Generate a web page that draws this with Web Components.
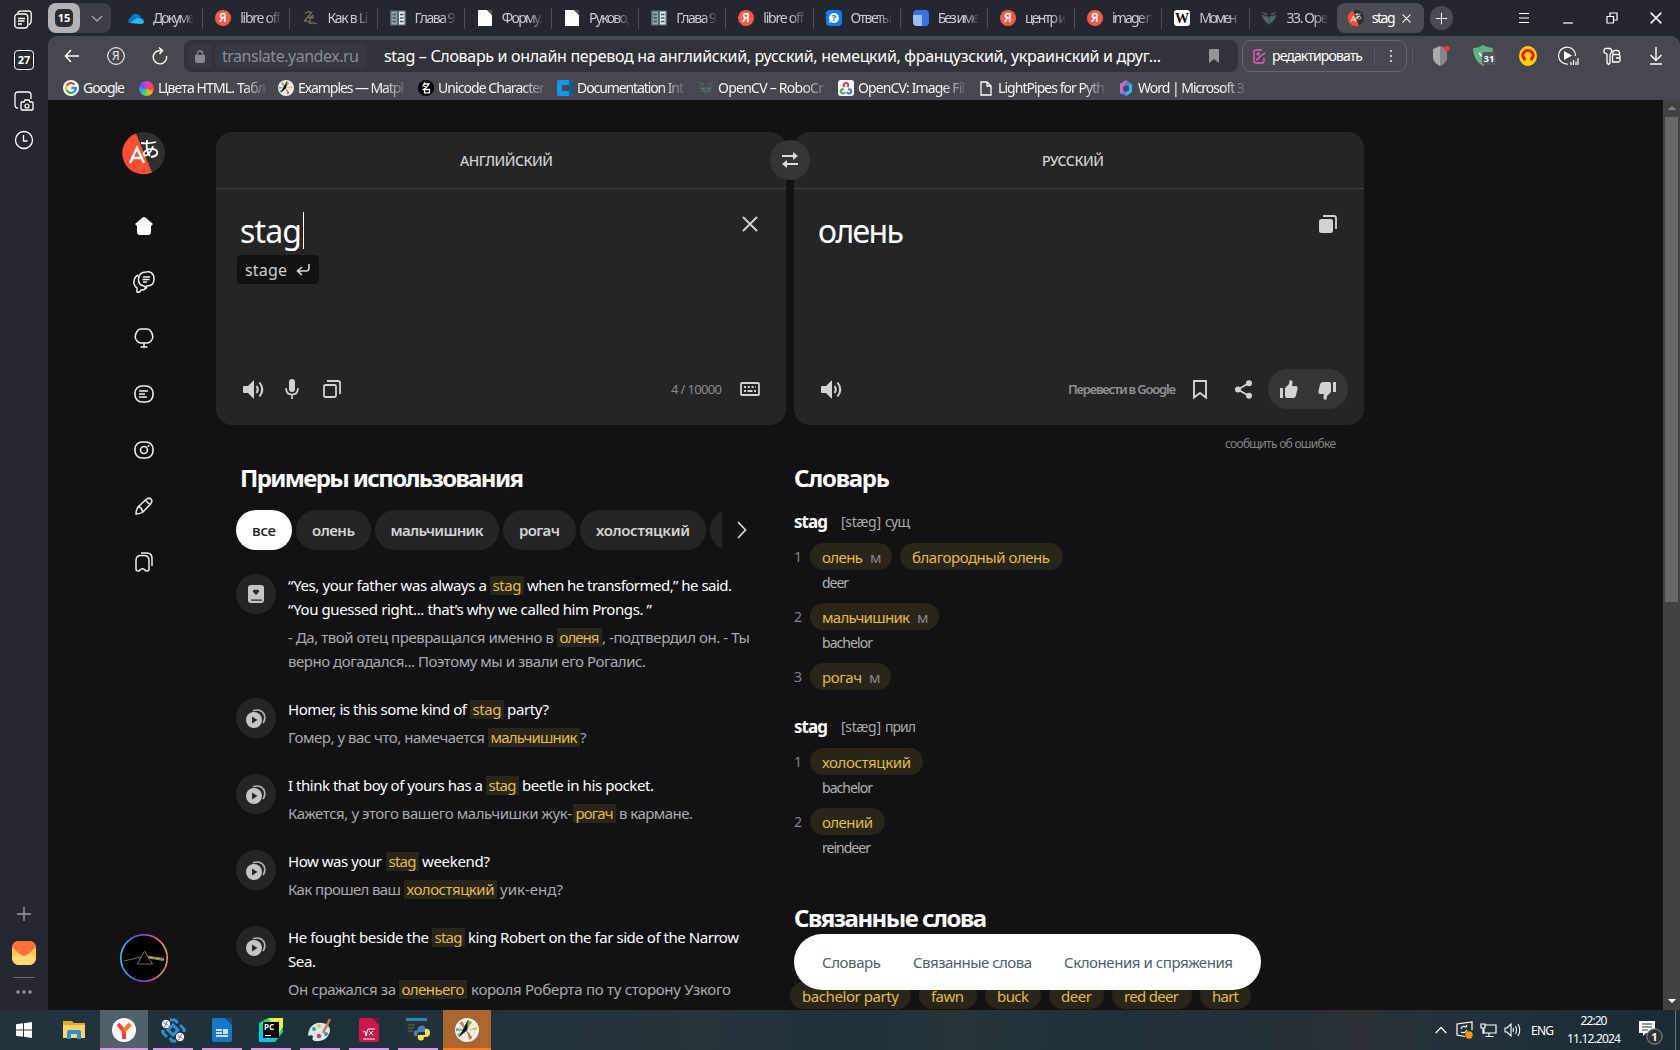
<!DOCTYPE html>
<html lang="ru">
<head>
<meta charset="utf-8">
<title>stag – Словарь и онлайн перевод</title>
<style>
html,body{margin:0;height:100%;overflow:hidden;background:#121214}
body{font-family:"Noto Sans","Noto Sans CJK JP",sans-serif;color:#fff}
</style>
</head>
<body>
<desktop-shell></desktop-shell>
<script>
const ya = '<circle cx="8" cy="8" r="8" fill="#f95a4a"/><text x="7.8" y="12.4" font-size="12" font-weight="600" fill="#fff" text-anchor="middle">Я</text>';
const book = '<path fill="#526873" d="M0 0h16v15H0z"/><path fill="#8fa0a8" d="M1.500 1h5.500v13H1.500z"/><path fill="#e4e9eb" d="M9 1h5.500v13H9z"/><path stroke="#40555f" stroke-width="1.300" d="M2.500 4h3.500M2.500 7.500h3.500M2.500 11h3.500M10 4h3.500M10 7.500h3.500M10 11h3.500"/>';
const doc = '<path fill="#fff" d="M1 0h9l5 5v11H1z"/><path fill="#555" d="M10 0h5v5z"/>';
const opencv = '<path fill="#64614c" d="M1 2l6 2-2 1-4-2zM15 2L9 4l2 1 4-2z"/><path fill="#3c5a68" d="M0 5l7 1 1 2 1-2 7-1-3 5-5 5-5-5z"/><path stroke="#807044" fill="none" d="M2 8l5 1M14 8l-5 1M4 11h3M12 11H9"/>';
const logo = '<circle cx="21" cy="21" r="21" fill="#302f30"/><path fill="#ff4e31" d="M13 1.600L29 40.400A21 21 0 1 1 13 1.600Z"/><path d="M7 31l7-15 7 15M9.500 26h9" fill="none" stroke="#fff" stroke-width="2.500"/><path d="M18 11c6 1 11 0 15-1M24 8c-1 8 0 13 3 16M30 14c-2 7-7 11-9 9s3-7 9-6 6 7-2 8" fill="none" stroke="#fff" stroke-width="1.800"/>';
const spk = '<path fill="currentColor" d="M0 7q0-1 1-1h4l5-5q1-1 1 0v17q0 1-1 0l-5-5H1q-1 0-1-1z"/><path fill="none" stroke="currentColor" stroke-width="2" d="M13.500 6q2.500 3.500 0 7M16.500 2.500q5.500 7 0 14"/>';
const thumb = '<path fill="currentColor" d="M0 8h3v10H0zM5 8l4-4 .5-3.500C11.500-.5 13 1 12.500 3L12 6h4.500Q18 6.500 17.500 9L16 15.500Q15.500 18 13 18H7q-2 0-2-2z"/>';
const mpl = (b) => `<circle cx="12" cy="12" r="12" fill="${b}"/><g fill="none" stroke="#d9d9d9"><circle cx="12" cy="12" r="4"/><circle cx="12" cy="12" r="8"/></g><path fill="#ef7b26" d="M12 12L5 5l2-2zM12 12l5 8-3 2z"/><path fill="#86b340" d="M12 12L13 2l4 2zM12 12L4 19l-2-3z"/><path fill="#59b0b5" d="M12 12L1 13v-3z"/><path fill="#efc22d" d="M12 12l10-3v3z"/><path stroke="#555" stroke-width=".7" d="M5 5l12 15M13 2l-1 10L4 19"/>`;
const ICONS = {
  tabs:['0 0 18 19','<g fill="none" stroke="#fff" stroke-width="1.300"><rect x=".8" y="4" width="13" height="14" rx="3"/><path d="M4 3.500Q4 1.300 6 1.200L14.500.8Q17 .8 17.200 3.500V11Q17 14 14.500 15M4 8.500h7M4 11h6.500M4 14h4"/></g>'],
  shot:['0 0 20 20','<path fill="none" stroke="#fff" stroke-width="1.300" d="M4 17Q1 17 1 14V4q0-3 3-3h10q3 0 3 3v4M8 11h2l1-2h4l1 2h2q1 0 1 1v6q0 1-1 1H8q-1 0-1-1v-6q0-1 1-1z"/><circle cx="13" cy="15" r="2" fill="none" stroke="#fff" stroke-width="1.200"/>'],
  clock:['0 0 20 20','<circle cx="10" cy="10" r="8.500" fill="none" stroke="#fff" stroke-width="1.300"/><path d="M9.500 5v6h4" fill="none" stroke="#fff" stroke-width="1.300"/>'],
  plus:['0 0 16 16','<path stroke="currentColor" stroke-width="1.300" d="M8 1v14M1 8h14"/>'],
  mail:['0 0 24 24','<rect width="24" height="24" rx="7" fill="#ffc64d"/><path fill="#ffda76" d="M0 16L9 11l3 2 3-2 9 6q-1 7-7 7H7q-6 0-7-7z"/><path fill="#ff703c" d="M0 6Q1 0 7 0h10q6 0 7 6l-9 8q-3 2-6 0z"/>'],
  dots:['0 0 16 4','<g fill="#9699a0"><circle cx="2" cy="2" r="1.700"/><circle cx="8" cy="2" r="1.700"/><circle cx="14" cy="2" r="1.700"/></g>'],
  chevd:['0 0 12 7','<path fill="none" stroke="#a4a5aa" stroke-width="1.400" d="M1 1l5 5 5-5"/>'],
  cloud:['0 0 16 16','<path fill="#087bd1" d="M1 13Q-1 9 3 7.500 5 3 9 4q3 .5 4 4 4 1 2.500 5z"/><path fill="#36b7f4" d="M2 13l7-5q5 0 7 4-.5 2-3 2z"/>'],
  ya:['0 0 16 16',ya], book:['0 0 16 15',book], doc:['0 0 16 16',doc], opencv:['0 0 16 16',opencv],
  zl:['0 0 16 16','<path d="M3 3.500q4-3 6.500-1L2 11.500q3-1.500 5 1M11 5Q7 9 8 13.500q3-1.500 7 .5M6 7.500h6" fill="none" stroke="#77705d" stroke-width="1.300"/>'],
  quest:['0 0 16 16','<rect width="16" height="16" rx="4" fill="#087eff"/><path fill="#fff" d="M8 3a5 5 0 1 1-3 9l-2 1 .5-3A5 5 0 0 1 8 3z"/><text x="8" y="11.300" font-size="9" font-weight="800" fill="#087eff" text-anchor="middle">?</text>'],
  cube:['0 0 16 16','<path fill="#3a72e6" d="M4 0h8q4 0 4 4v8q0 4-4 4H9V5H0q0-5 4-5z"/><path fill="#99bdff" d="M0 5h9v11H4q-4 0-4-4z"/>'],
  wiki:['0 0 16 16','<rect width="16" height="16" rx="3" fill="#fff"/><text x="8" y="12.500" font-family="Liberation Serif" font-size="14" font-weight="700" fill="#111" text-anchor="middle">W</text>'],
  logo:['0 0 42 42',logo],
  x:['0 0 16 16','<path stroke="currentColor" stroke-width="1.900" stroke-linecap="round" d="M1.500 1.500l13 13M14.500 1.500l-13 13"/>'],
  menu:['0 0 12 12','<path stroke="#fff" d="M1 1.500h10M1 6h10M1 10.500h10"/>'],
  min:['0 0 12 12','<path stroke="#fff" stroke-width="1.200" d="M1 11h10"/>'],
  restore:['0 0 12 12','<path fill="none" stroke="#fff" stroke-width="1.200" d="M1 4.500h6.500V11H1zM4 4V1h7v7H8"/>'],
  back:['0 0 16 14','<path fill="none" stroke="#fff" stroke-width="1.400" d="M15 7H1.500M7 1L1.500 7 7 13"/>'],
  yaring:['0 0 18 18','<circle cx="9" cy="9" r="8.300" fill="none" stroke="#e8e8ea" stroke-width="1.200"/><text x="8.800" y="13.200" font-size="12" fill="#e8e8ea" text-anchor="middle">Я</text>'],
  reload:['0 0 16 18','<path fill="none" stroke="#fff" stroke-width="1.400" d="M14.500 9A6.700 6.700 0 1 1 8 3.500h2M7 .5l3.500 3-3 3.500"/>'],
  lock:['0 0 10 13','<path fill="#868990" d="M0 5h10v6q0 2-2 2H2q-2 0-2-2z"/><path fill="none" stroke="#868990" stroke-width="1.400" d="M2.500 6V3.500Q2.500 1 5 1t2.500 2.500V6"/>'],
  flag:['0 0 10 14','<path fill="#95969b" d="M1 0h8q1 0 1 1v13l-5-4-5 4V1q0-1 1-1z"/>'],
  edit:['0 0 13 15','<path fill="none" stroke="#eb5fbd" stroke-width="1.400" d="M9 1H3Q1 1 1 3v9q0 2 2 2h6q2 0 2-2V9M5.500 10.500l.5-2L12 4M3.500 5h3.500M5.200 3.200v3.600M3 10.500h2M4 9.500v2"/>'],
  vdots:['0 0 4 14','<g fill="#c4c4c8"><circle cx="2" cy="2" r="1.200"/><circle cx="2" cy="7" r="1.200"/><circle cx="2" cy="12" r="1.200"/></g>'],
  shield:['0 0 18 22','<path fill="#acacad" d="M1 4l7-3 7 3v8q0 6-7 9-7-3-7-9z"/><path fill="#868688" d="M8 1l7 3v8q0 6-7 9z"/><circle cx="15" cy="3.500" r="2.800" fill="#ee3340"/>'],
  ext:['0 0 24 22','<path fill="#5eb581" d="M0 3Q6 3 10 0q5 3 10 3 0 13-10 18Q0 15 0 3z"/><path stroke="#fff" stroke-width="1.600" fill="none" d="M6 8l3 3 3-3"/><rect x="9" y="7" width="14" height="13" rx="3" fill="#55565a"/><text x="16" y="17.300" font-size="9.500" font-weight="700" fill="#fff" text-anchor="middle">31</text>'],
  head:['0 0 18 20','<ellipse cx="9" cy="10" rx="9" ry="10" fill="#ffd400"/><path fill="none" stroke="#f21926" stroke-width="3" d="M5.500 14.500v-2Q3 11 4 8q1-3.500 5-3.500T14 8q1 3-1.500 4.500v2"/>'],
  play:['0 0 20 20','<path fill="none" stroke="#fff" stroke-width="1.200" d="M10 18A8.500 8.500 0 1 1 17.500 10M13 19v-3M15.500 19v-5M18 19v-3.500M20 19v-7"/><path fill="#fff" d="M6 5l8 4.500L6 14z"/>'],
  keys:['0 0 18 19','<path fill="none" stroke="#fff" stroke-width="1.300" stroke-linejoin="round" d="M2 1.500h5.500L9 3.500 7.500 7 7 8v8l-1.500 1.500L4 16V7L1 5.500V3zM10 7.500V5.500q0-2 2-2h2.500q1.500 0 2 2V8M9.500 15V9q0-1.500 1.500-1.500h4.500Q17 7.500 17 9v4.500q0 1.500-1.500 1.500zM13 11h4"/>'],
  down:['0 0 14 18','<path fill="none" stroke="#fff" stroke-width="1.400" d="M7 0v13M1.500 8L7 13.500 12.500 8M1 17h12"/>'],
  google:['0 0 16 16','<circle cx="8" cy="8" r="8" fill="#fff"/><g fill="none" stroke-width="2.300"><path stroke="#ea4335" d="M3.700 5.700A5 5 0 0 1 11.500 4.500"/><path stroke="#fbbc05" d="M3.700 5.700a5 5 0 0 0 0 4.600"/><path stroke="#34a853" d="M3.700 10.300A5 5 0 0 0 11.300 11.700"/><path stroke="#4285f4" d="M11.300 11.700A5 5 0 0 0 13 8H8.200"/></g>'],
  uni:['0 0 16 16','<circle cx="8" cy="8" r="8" fill="#000"/><path d="M7 2.500L4.500 6.500M6.300 4h4.700q-2 4-6.500 6M6 6l2.500 1.500M6.500 9.500h5v3.300h-5z" fill="none" stroke="#fff" stroke-width="1.300"/>'],
  docu:['0 0 16 16','<rect width="16" height="16" rx="2" fill="#1496ec"/><path fill="#474750" d="M5 5h7v6H5z"/><path fill="#075e9c" d="M12 0h2q2 0 2 2v12q0 2-2 2h-2z"/>'],
  cv:['0 0 16 16','<rect width="16" height="16" rx="3" fill="#fff"/><g fill="none" stroke-width="2"><path stroke="#e33" d="M6.500 7a2.300 2.300 0 1 1 3 0"/><path stroke="#37af50" d="M6 9.500A2.200 2.200 0 1 0 7 12"/><path stroke="#3478d4" d="M10 9.500A2.200 2.200 0 1 1 9 12"/></g>'],
  page:['0 0 12 15','<path fill="none" stroke="#fff" stroke-width="1.300" d="M1 1h6l4 4v9H1zM7 1v4h4"/>'],
  office:['0 0 16 16','<path fill="#6378dc" d="M8 0l6 4v8l-6 4-6-3V4z"/><path fill="#b96ed5" d="M2 4l6-4v5L5 8v6l-3-1z"/><path fill="#2db7f1" d="M14 4v8l-6 4v-4l3-2V6z"/><path fill="#474750" d="M8 5l3 2v3l-3 2-3-2V7z"/>'],
  mpl:['0 0 24 24',mpl('#f3f3f3')],
  home:['0 0 18 18','<path fill="#fff" d="M9 0q1 0 2 1l7 6-2 2v6q0 3-3 3H5q-3 0-3-3V9L0 7l7-6q1-1 2-1z"/>'],
  chat:['0 0 22 22','<path fill="none" stroke="#eee" stroke-width="1.500" d="M13 1C17 0 21 2 21 8q0 7-7 7l-2 1-1-1Q5 14 5.500 8 6 1 13 1zM5 4Q0 7 1 13q1 3 3 4v4q3 1 4-2 4 0 6-3M10 6h7M9.500 8.500h7M10 11h4"/>'],
  tree:['0 0 20 20','<path fill="none" stroke="#eee" stroke-width="1.500" d="M6.500 1h7q2 0 3.500 2.500 3.500 5.500 0 9.500-1.500 2-4 2H7q-2.500 0-4-2-3.500-4 0-9.500Q4.500 1 6.500 1zM10 15v4M6.500 19h7"/>'],
  note:['0 0 20 18','<rect x="1" y="1" width="18" height="16" rx="7" fill="none" stroke="#eee" stroke-width="1.600"/><path stroke="#eee" stroke-width="1.300" d="M5 6h9M5 9h6M5 12h8"/>'],
  cam:['0 0 20 18','<rect x="1" y="1" width="18" height="16" rx="7" fill="none" stroke="#eee" stroke-width="1.600"/><circle cx="10" cy="9" r="3.500" fill="none" stroke="#eee" stroke-width="1.600"/><circle cx="14.500" cy="5" r="1" fill="#eee"/>'],
  pencil:['0 0 18 18','<path fill="none" stroke="#eee" stroke-width="1.500" d="M1 17q0-4 2-7L11 2.500q3-2.500 5-.5t-.5 5L8 15q-3 2-7 2zM10.500 3.500l4.500 4M3 10q4 0 4.500 5"/>'],
  marks:['0 0 19 20','<path fill="none" stroke="#eee" stroke-width="1.500" d="M3 19q-2 0-2-2V8.500Q1 3.500 6 3.500h3q5 0 5 5V17q0 2-2 2-1.500 0-2.500-1.500-2-1.500-4 0Q4.500 19 3 19zM6 1h5.500Q17 1 17 6.500V14"/>'],
  swap:['0 0 16 16','<path fill="none" stroke="#dcdcdc" stroke-width="1.800" d="M0 4h14M16 12H2"/><path fill="#dcdcdc" d="M11 0l5 4-5 4zM5 8L0 12l5 4z"/>'],
  enter:['0 0 14 12','<path fill="none" stroke="#d6d6d6" stroke-width="1.600" d="M13 0v4q0 3-3 3H2M6 3L1.500 7 6 11"/>'],
  spk:['0 0 21 19',spk],
  mic:['0 0 14 20','<rect x="4" y="0" width="6" height="13" rx="3" fill="currentColor"/><path fill="none" stroke="currentColor" stroke-width="1.700" d="M1 9q0 6.500 6 6.500T13 9M7 15v5"/>'],
  copy:['0 0 18 18','<path fill="none" stroke="currentColor" stroke-width="1.800" d="M2.500 5h9Q13 5 13 6.500v9q0 1.500-1.500 1.500h-9Q1 17 1 15.500v-9Q1 5 2.500 5zM4 1h11q2 0 2 2v11"/>'],
  copyf:['0 0 18 18','<rect x="0" y="4" width="14" height="14" rx="2.500" fill="currentColor"/><path fill="none" stroke="currentColor" stroke-width="1.800" d="M4 1h11q2 0 2 2v11"/>'],
  kbd:['0 0 20 14','<rect x="1" y="1" width="18" height="12" rx="1" fill="none" stroke="currentColor" stroke-width="1.800"/><path stroke="currentColor" stroke-width="1.800" stroke-dasharray="2 1.800" d="M4 5h12"/><path stroke="currentColor" stroke-width="1.800" d="M4 9h2M7.500 9h5M14 9h2"/>'],
  mark:['0 0 14 19','<path fill="none" stroke="currentColor" stroke-width="1.900" d="M1 1h12v16.500L7 13l-6 4.500z"/>'],
  share:['0 0 17 19','<path fill="none" stroke="currentColor" stroke-width="1.900" d="M14 3L3 9.500 14 16"/><g fill="currentColor"><circle cx="14" cy="3.200" r="3"/><circle cx="3" cy="9.500" r="3"/><circle cx="14" cy="15.800" r="3"/></g>'],
  up:['0 0 18 18',thumb], dn:['0 0 18 18','<g transform="rotate(180 9 9)">'+thumb+'</g>'],
  chevr:['0 0 10 18','<path fill="none" stroke="#ddd" stroke-width="1.700" d="M1 1l7.500 8L1 17"/>'],
  novel:['0 0 16 18','<rect width="16" height="18" rx="3" fill="#c5c5c5"/><path fill="#28282a" d="M8 10L5.200 7Q4.500 4.700 6.500 4.500 7.500 4.500 8 5.500q.5-1 1.500-1 2 .2 1.300 2.500zM3 14.500h11v1.300H3z"/>'],
  video:['0 0 20 19','<path fill="none" stroke="#b5b5b5" stroke-width="1.700" d="M7 2q7-3 11 3 2 5-1 9"/><circle cx="8.500" cy="11" r="8.500" fill="#28282a"/><circle cx="8" cy="11" r="8" fill="#c5c5c5"/><path fill="#28282a" d="M6 7.500l5.500 3.500L6 14.500z"/>'],
  avatar:['0 0 48 48','<defs><linearGradient id="r"><stop stop-color="#43c4e8"/><stop offset=".3" stop-color="#5560e0"/><stop offset=".62" stop-color="#c04ac0"/><stop offset="1" stop-color="#f7a13e"/></linearGradient></defs><circle cx="24" cy="24" r="23.200" fill="#000" stroke="url(#r)" stroke-width="1.600"/><path stroke="#6b7377" fill="none" d="M4 27l17-4M24.500 17l-7 13h15z"/><path stroke="#ee4033" stroke-width="1.200" d="M27 22l17 2.500"/><path stroke="#e6d03d" stroke-width="1.200" d="M28 23l16 2.500"/><path stroke="#4cb35c" stroke-width="1.200" d="M28.500 24l15.500 2.500"/>'],
  win:['0 0 16 16','<path fill="#fff" d="M0 2.300L7 1.300v6.200H0zM8 1.200L16 0v7.500H8zM0 8.500h7v6.200l-7-1zM8 8.500h8V16l-8-1.200z"/>'],
  folder:['0 0 22 20','<path fill="#e9a824" d="M0 1h9l2 2h11v15H0z"/><path fill="#ffd56a" d="M0 5h22v13H0z"/><path fill="#2c8ed6" d="M4 19v-7q0-2 2-2h10q2 0 2 2v7h-4v-5H8v5z"/>'],
  ybrow:['0 0 24 24','<circle cx="12" cy="12" r="12" fill="#fff"/><path fill="none" stroke="#fc3f35" stroke-width="4" d="M6 6l6 7 6-7M12 12v9"/><path stroke="#ff7a25" stroke-width="4" d="M12 13l6-7"/>'],
  chain:['0 0 24 24','<g fill="none" stroke="#2b8fd2" stroke-width="3"><path d="M12 7l5 5-5 5-5-5z"/><path d="M9 2h5l3 3M2 12v3l4 4M19 7l4 4v3M9 20l2 3h4"/></g><g fill="#f1f1f5"><circle cx="5" cy="6" r="4.200"/><circle cx="19" cy="19" r="4.200"/></g><path stroke="#77809a" fill="none" d="M2.500 4.500l5 3M6.500 3L3.500 9M16.500 17.500l5 3M20.500 16l-3 6"/>'],
  writer:['0 0 20 24','<path fill="#1678c6" d="M0 2q0-2 2-2h11l7 7v15q0 2-2 2H2q-2 0-2-2z"/><path fill="#0b4e87" d="M13 0h7v7z"/><path stroke="#fff" stroke-width="1.500" d="M4 12h6M4 15h6M4 18h12"/><path fill="#bfe4ff" d="M11 11h5v5h-5z"/>'],
  pc:['0 0 24 24','<path fill="#20d789" d="M0 5l9-5h13l2 14-8 10H0z"/><path fill="#e8f23d" d="M10 0h14v9l-6 8z"/><path fill="#07c3f2" d="M0 10v14h14l5-7z"/><path fill="#000" d="M4 4h16v16H4z"/><text x="5" y="12" font-size="8" font-weight="700" fill="#fff">PC</text><path stroke="#fff" d="M6 17.500h6"/>'],
  paint:['0 0 24 24','<path fill="#d7e7f2" d="M2 10Q8 2 18 6q7 4 2 12-4 6-13 5-4-1-2-4 0-3-5-1Q0 14 2 10z"/><circle cx="6" cy="11" r="2" fill="#3bad5b"/><circle cx="11" cy="8" r="2" fill="#e3c73b"/><circle cx="11" cy="18" r="2.300" fill="#d94454"/><circle cx="18" cy="16" r="2" fill="#3d8bd0"/><path stroke="#c87d3e" stroke-width="2.500" d="M15 15l7-14"/>'],
  math:['0 0 20 24','<path fill="#cd1749" d="M0 2q0-2 2-2h11l7 7v15q0 2-2 2H2q-2 0-2-2z"/><path fill="#7e1432" d="M13 0h7v7z"/><path fill="none" stroke="#fff" d="M4 14l2-1 1 5 2-7h7M10 13l4 4M14 13l-4 4M4 21h12"/>'],
  idle:['0 0 24 24','<path fill="#2a3034" d="M0 1h21v18H0z"/><path fill="#2d83bc" d="M0 0h21v3H0z"/><path stroke="#418648" d="M2 7h7M2 10h6M2 13h5"/><path fill="#4583b5" d="M12 9q5-3 7 0v5h-6q-2 0-2 4-4 1-3-4 0-2 4-2z"/><path fill="#ffdc52" d="M19 11q5-1 5 4 0 4-4 4h-2q0 5-5 3-2-1-1-5h7z"/>'],
  chevu:['0 0 12 8','<path fill="none" stroke="#fff" stroke-width="1.300" d="M.7 7L6 1.500 11.300 7"/>'],
  sync:['0 0 17 18','<path fill="none" stroke="#fff" stroke-width="1.200" d="M9 15.500L1 14V3l15-2v8M5 8q1-4 5-2l1-2M5 11q4 2 6-2"/><circle cx="13" cy="14" r="3.700" fill="#ff9800"/>'],
  net:['0 0 17 15','<path fill="none" stroke="#fff" stroke-width="1.200" d="M5 2h11v8H4V6M9 10v3M5.500 13.500h8M1 1h4v4H1zM3 5v6"/>'],
  vol:['0 0 17 14','<path fill="none" stroke="#fff" stroke-width="1.100" d="M1 5h2l4-4v12L3 9H1zM9 5q1 2 0 4M11.500 3q2 4 0 8M14 1q3.500 6 0 12"/>'],
  notif:['0 0 24 25','<path fill="#fff" d="M0 1h16v12H7l-3 3v-3H0z"/><path stroke="#22313a" d="M3 4h10M3 7h10M3 10h6"/><circle cx="15.500" cy="16.500" r="7.700" fill="#2f3438" stroke="#8e9295"/><text x="15.500" y="20.500" font-size="11" font-weight="700" fill="#fff" text-anchor="middle">1</text>']
};
const def = (name, css, html) => customElements.define(name, class extends HTMLElement {
  connectedCallback() {
    if (this.shadowRoot) return;
    const r = this.attachShadow({mode:'open'});
    r.innerHTML = `<style>*{box-sizing:border-box}:host{display:block;box-sizing:border-box}${css}</style>` + (typeof html === 'function' ? html(this) : html);
  }
});
const a = (e, n, d = '') => e.getAttribute(n) ?? d;
const ic = (n, w, h, s = '') => `<ui-icon name="${n}" w="${w}" h="${h ?? w}" style="${s}"></ui-icon>`;
const t = (txt, w, s = '') => `<fit-text w="${w}" style="${s}">${txt}</fit-text>`;

def('desktop-shell', `:host{display:grid;grid-template:1010px 40px/48px 1632px;width:1680px;height:1050px}
 main{display:flex;flex-direction:column;background:#242730;min-width:0} task-bar{grid-column:1/3}`,
 `<side-bar></side-bar><main><tab-strip></tab-strip><nav-bar></nav-bar><bookmark-bar></bookmark-bar><translate-page></translate-page></main><task-bar></task-bar>`);

def('side-bar', `:host{display:flex;flex-direction:column;align-items:center;background:#252831;padding:10px 0 16px;color:#9ea0a6}
 .cal{width:20px;height:20px;border:1.3px solid #fff;border-radius:4px;color:#fff;display:grid;place-items:center;margin:21px 0;font:700 11px/16px "Noto Sans"}
 .sp{flex:1}.ln{width:22px;height:1px;background:#686b72;margin:12px 0 12px}`,
 ic('tabs',18,19,'margin-left:-2px') + `<div class="cal">27</div>` + ic('shot',20) + ic('clock',20,20,'margin-top:19px') +
 `<div class="sp"></div>` + ic('plus',16) + ic('mail',24,24,'margin-top:19px') + `<div class="ln"></div>` + ic('dots',16,4));

const TABS = [['cloud','Докуме',42],['ya','libre off',41],['zl','Как в Li',41],['book','Глава 9',41],['doc','Форму.',41],['doc','Руково,',41],['book','Глава 9',41],['ya','libre off',41],['quest','Ответы',42],['cube','Без име',42],['ya','центр и',42],['ya','image n',42],['wiki','Момен',38],['opencv','33. Оре',42]];
def('browser-tab', `:host{width:87.200px;flex:none;height:36px;display:flex;align-items:center;padding-left:12px;gap:9px;color:#c9cad0;font-size:14px}
 i{width:1px;height:21px;background:#4c4f58;margin-left:auto}:host([last]) i{visibility:hidden}
 .m{width:43px;margin-top:-1px;overflow:hidden;display:flex;-webkit-mask-image:linear-gradient(90deg,#000 68%,rgba(0,0,0,.15))}`,
 e => ic(a(e,'icon'),16) + `<div class="m"><slot></slot></div><i></i>`);
def('tab-strip', `:host{display:flex;align-items:center;height:36px}
 .g{display:flex;width:63px;height:30px;background:#3d3e47;border-radius:8px;align-items:center;margin-right:5px}
 .b{width:32px;height:30px;border-radius:8px;background:#b2b2b7;display:grid;place-items:center;margin-right:11px}
 .n{width:18px;height:18px;border-radius:5px;background:#2b2c34;font:700 11px/18px "Noto Sans";text-align:center}
 .act{width:87px;height:30px;border-radius:8px;background:#4c4c55;display:flex;align-items:center;padding-left:11px;font-size:14px}
 .add{width:23px;height:24px;border-radius:12px;background:#4a4b54;display:grid;place-items:center;margin:0 65px 0 6px}
 .w{display:flex;gap:32px;align-items:center}`,
 `<div class="g"><div class="b"><div class="n">15</div></div>${ic('chevd',12,7)}</div>` +
 TABS.map((x,i)=>`<browser-tab icon="${x[0]}" ${i==13?'last':''}>${t(x[1],x[2])}</browser-tab>`).join('') +
 `<div class="act">${ic('logo',16)}${t('stag',24,'margin:-1px 6px 0 8px')}${ic('x',9)}</div><div class="add">${ic('plus',13)}</div>
 <div class="w">${ic('menu',12)}${ic('min',12)}${ic('restore',12)}${ic('x',12)}</div>`);

def('nav-bar', `:host{display:flex;align-items:center;height:40px;background:#474750;border-radius:9px 9px 0 0;padding-left:16px}
 .f{display:flex;align-items:center;width:1054px;height:32px;background:#32323b;border-radius:8px;padding:0 19px 0 4px;margin-left:16px}
 .l{width:24px;height:24px;border-radius:5px;background:#373841;display:grid;place-items:center;margin-right:3px}
 .d{width:152px;height:24px;border-radius:5px;background:#373841;padding-left:7px;font-size:16px;line-height:24px;color:#8b8c94;margin-right:17px}
 .t{font-size:16px;flex:1}.e{display:flex;align-items:center;width:165px;height:32px;border:1px solid #686870;border-radius:9px;margin-left:4px;padding-left:10px;font-size:14px}
 u{width:1px;height:18px;background:#5b5b64}`,
 ic('back',16,14) + ic('yaring',18,18,'margin:0 27px') + ic('reload',16,18) +
 `<div class="f"><div class="l">${ic('lock',10,13)}</div><div class="d">${t('translate.yandex.ru',137)}</div><div class="t">${t('stag – Словарь и онлайн перевод на английский, русский, немецкий, французский, украинский и друг...',777)}</div>${ic('flag',10,14)}</div>
 <div class="e">${ic('edit',13,15)}${t('редактировать',91,'margin:-2px 11px 0 6px')}<u></u>${ic('vdots',4,14,'margin-left:14px')}</div><u style="margin-left:5px"></u>` +
 ic('shield',18,22,'margin-left:19px') + ic('ext',24,22,'margin-left:23px') + ic('head',18,20,'margin-left:22px') + ic('play',20,20,'margin-left:21px') + ic('keys',18,19,'margin-left:25px') + ic('down',14,18,'margin-left:28px'));

const BM = [['google','Google',42,76],['hue','Цвета HTML. Табл',108,139],['mpl','Examples — Matpl',106,140],['uni','Unicode Character',107,139],['docu','Documentation Int',107,141],['opencv','OpenCV – RoboCr',106,140],['cv','OpenCV: Image Fil',107,140],['page','LightPipes for Pyth',107,140],['office','Word | Microsoft 3',107,140]];
def('bookmark-bar', `:host{display:flex;height:24px;background:#474750;padding:0 0 0 15px;font-size:14px;color:#f4f4f5}
 div{display:flex;align-items:center;height:32px;margin-top:-4px;flex:none} .m{-webkit-mask-image:linear-gradient(90deg,#000 78%,rgba(0,0,0,.1));width:108px;overflow:hidden;height:22px;margin:-1px 0 0}.m.n{-webkit-mask:none}
 b{width:15px;height:15px;border-radius:50%;background:conic-gradient(#d540c9,#ff4040 25%,#ffb224 38%,#68d73c 52%,#20bccc 66%,#6353f7 82%,#d540c9);margin-right:4px}`,
 BM.map(x=>`<div style="width:${x[3]}px">${x[0]=='hue'?'<b></b>':ic(x[0],x[0]=='page'?12:16,x[0]=='page'?15:16,x[0]=='page'?'margin:0 6px 0 2px':'margin-right:4px')}<div class="m ${x[0]=='google'?'n':''}">${t(x[1],x[2])}</div></div>`).join(''));

def('translate-page', `:host{flex:none;min-height:0;display:grid;grid-template-columns:168px 570px 8px 1fr 17px;grid-template-rows:910px;height:910px;background:#121214;overflow:hidden}
 .c{padding-top:32px;min-width:0;position:relative}
 .gap{position:relative;z-index:2}.gap div{position:absolute;left:-16px;top:40px;width:40px;height:40px;border-radius:50%;background:#353537;display:grid;place-items:center}`,
 `<page-nav></page-nav><div class="c"><source-card></source-card><usage-examples></usage-examples></div><div class="gap"><div>${ic('swap',16)}</div></div>
 <div class="c"><target-card></target-card><word-dictionary></word-dictionary></div><scroll-bar></scroll-bar>`);

def('page-nav', `:host{display:flex;flex-direction:column;align-items:center;padding:32px 0 28px;margin-left:24px;width:144px}
 nav{display:flex;flex-direction:column;margin-top:24px}nav div{height:56px;display:grid;place-items:center}p{flex:1;margin:0}`,
 ic('logo',42) + `<nav>` + [['home',18,18],['chat',22,22],['tree',20,20],['note',20,18],['cam',20,18],['pencil',18,18],['marks',19,20]].map(x=>`<div>${ic(...x)}</div>`).join('') + `</nav><p></p>` + ic('avatar',48));

const cardCss = `:host{display:flex;flex-direction:column;width:570px;height:293px;border-radius:16px;background:#252527;color:#d2d2d2}
 header{height:57px;border-bottom:1px solid #414143;display:grid;place-items:center;font-size:14px;font-weight:500}
 .top{display:flex;justify-content:space-between;padding:0 0 0 24px;height:65px}
 .big{font-size:32px;line-height:40px;color:#fff;display:flex;padding-top:22px;font-weight:400}
 .tools{display:flex;align-items:center;height:40px;margin-top:auto;margin-bottom:16px;font-size:13px;color:#8b8b8b}ui-icon{color:#d2d2d2}`;
def('source-card', cardCss + `i{width:1px;height:37px;background:#fff;margin:1px 0 0 1px}
 .hint{display:flex;align-items:center;width:82px;height:29px;background:#111112;border-radius:4px;margin-left:21px;margin-top:1px;padding-left:8px;font-size:16px;color:#cfcfcf}`,
 `<header>${t('АНГЛИЙСКИЙ',93,'margin-left:11px')}</header><div class="top"><div class="big">${t('stag',62)}<i></i></div>${ic('x',16,16,'margin:27px 28px 0 0')}</div>
 <div class="hint">${t('stage',42)}${ic('enter',14,12,'margin-left:9px')}</div>
 <div class="tools">${ic('spk',21,19,'margin-left:27px')}${ic('mic',14,20,'margin-left:21px')}${ic('copy',18,18,'margin-left:24px')}${t('4 / 10000',51,'margin-left:330px')}${ic('kbd',20,14,'margin-left:18px')}</div>`);
def('target-card', cardCss + `.like{display:flex;align-items:center;gap:20px;width:80px;height:40px;border-radius:20px;background:#353537;margin-left:16px;padding-left:12px}`,
 `<header>${t('РУССКИЙ',62,'margin-right:12px')}</header><div class="top"><div class="big">${t('олень',86)}</div>${ic('copyf',18,18,'margin:26px 27px 0 0')}</div>
 <div class="tools">${ic('spk',21,19,'margin-left:27px')}${t('Перевести в Google',108,'margin-left:226px;font-weight:600;color:#8f8f90')}${ic('mark',14,19,'margin-left:17px')}${ic('share',17,19,'margin-left:28px')}<div class="like">${ic('up',18)}${ic('dn',18,18,'margin-top:3px')}</div></div>`);

def('usage-chip', `:host{height:40px;flex:none;border-radius:20px;background:#252527;color:#d3d3d3;font-size:15px;font-weight:600;display:grid;place-items:center;padding-bottom:1px}:host([on]){background:#fff;color:#202020;font-weight:500}`, `<slot></slot>`);
def('usage-example', `:host{display:flex;gap:12px;margin-bottom:24px;font-size:15px;line-height:24px}
 .i{width:40px;height:40px;border-radius:50%;background:#252527;display:grid;place-items:center;flex:none}.b{display:flex;flex-direction:column;color:#fff;margin:-1px 0 1px}`,
 e => `<div class="i">${a(e,'kind')=='novel'?ic('novel',16,18):ic('video',20,19)}</div><div class="b"><slot></slot></div>`);
def('text-line', `:host{display:flex;height:24px;align-items:center;white-space:pre}:host([ru]){color:#aaaaac}:host([gap]){margin-top:4px}`, `<slot></slot>`);
def('hi-mark', `:host{height:19px;background:#2a2519;color:#e2bd43;line-height:19px;display:flex;justify-content:center;align-items:center}`, `<slot></slot>`);
const m = (txt, w, l=3, r=3) => `<hi-mark style="width:${w}px;margin:0 ${r}px 0 ${l}px">${t(txt,w-5)}</hi-mark>`;
const L = (at, ...x) => `<text-line ${at}>${x.join('')}</text-line>`;
def('usage-examples', `:host{padding:35px 0 0 20px}h2{margin:0 0 14px 4px;font-size:24px;line-height:36px;height:36px;font-weight:700;display:flex}
 .r{display:flex;align-items:center;margin-bottom:24px}.chips{display:flex;gap:4px;width:486px;overflow:hidden;margin-right:15px}`,
 `<h2>${t('Примеры использования',284)}</h2><div class="r"><div class="chips">` +
 [['все',24,56],['олень',43,75],['мальчишник',93,124],['рогач',41,73],['холостяцкий',94,126]].map((x,i)=>`<usage-chip ${i?'':'on'} style="width:${x[2]}px">${t(x[0],x[1])}</usage-chip>`).join('') +
 `<usage-chip style="width:90px"></usage-chip></div>${ic('chevr',10,18)}</div>
 <usage-example kind="novel">` +
 L('',t('“Yes, your father was always a',199),m('stag',34),t('when he transformed,” he said.',205)) +
 L('',t('“You guessed right... that’s why we called him Prongs. ”',364)) +
 L('ru gap',t('- Да, твой отец превращался именно в',266),m('оленя',45,3,0),t(', -подтвердил он. - Ты',148)) +
 L('ru',t('верно догадался... Поэтому мы и звали его Рогалис.',358)) + `</usage-example><usage-example>` +
 L('',t('Homer, is this some kind of',179),m('stag',34),t('party?',42)) +
 L('ru gap',t('Гомер, у вас что, намечается',197),m('мальчишник',92,3,0),t('?',7)) + `</usage-example><usage-example>` +
 L('',t('I think that boy of yours has a',195),m('stag',33),t('beetle in his pocket.',132)) +
 L('ru gap',t('Кажется, у этого вашего мальчишки жук-',284),m('рогач',43,1,3),t('в кармане.',74)) + `</usage-example><usage-example>` +
 L('',t('How was your',94),m('stag',33,4),t('weekend?',68)) +
 L('ru gap',t('Как прошел ваш',113),m('холостяцкий',93),t('уик-енд?',63)) + `</usage-example><usage-example>` +
 L('',t('He fought beside the',141),m('stag',33),t('king Robert on the far side of the Narrow',271)) +
 L('',t('Sea.',28)) +
 L('ru gap',t('Он сражался за',108),m('оленьего',68,3,4),t('короля Роберта по ту сторону Узкого',260)) + `</usage-example>`);

def('word-chip', `:host{height:27px;border-radius:14px;background:#2a2519;color:#e2bd43;font-size:15px;display:flex;align-items:center;padding-left:12px;flex:none}`, `<slot></slot>`);
const wc = (txt, w, tw, g) => `<word-chip style="width:${w}px">${t(txt,tw)}${g?t('м',10,'margin-left:7px;color:#858585'):''}</word-chip>`;
def('dict-row', `:host{height:60px}.a{display:flex;align-items:center;height:27px;font-size:14px;color:#858585}.n{width:16px}.x{display:flex;gap:8px}.s{margin:0 0 0 28px;font-size:14px;line-height:26px;color:#b2b2b2;display:flex}`,
 e => `<div class="a"><div class="n">${a(e,'n')}</div><div class="x"><slot></slot></div></div><div class="s">${a(e,'sub')?t(a(e,'sub'),a(e,'sw')):''}</div>`);
def('dict-head', `:host{display:flex;align-items:center;height:24px;font-size:14px;color:#a9a9a9;margin-bottom:10px}`,
 e => t('stag',34,'font-size:17px;font-weight:700;color:#fff;margin-right:13px') + t('[stæg]',40,'margin-right:4px') + t(a(e,'pos'),a(e,'pw')));
def('float-menu', `:host{display:flex;align-items:center;position:absolute;left:0;top:834px;width:467px;height:56px;border-radius:28px;background:#fff;color:#4b6070;font-size:15px;padding-left:28px;gap:32px}`,
 t('Словарь',59) + t('Связанные слова',119) + t('Склонения и спряжения',169));
def('word-dictionary', `.err{margin:10px 0 0 431px;height:18px;line-height:18px;font-size:12px;color:#858585;display:flex}
 h2{margin:7px 0 13px;font-size:24px;line-height:36px;height:36px;font-weight:700;display:flex}.rel{display:flex;gap:8px;margin:46px 0 0 -4px}`,
 `<div class="err">${t('сообщить об ошибке',111)}</div><h2>${t('Словарь',96)}</h2><dict-head pos="сущ" pw="25"></dict-head>
 <dict-row n="1" sub="deer" sw="27">${wc('олень',82,41,1)}${wc('благородный олень',163,138)}</dict-row>
 <dict-row n="2" sub="bachelor" sw="51">${wc('мальчишник',129,88,1)}</dict-row>
 <dict-row n="3">${wc('рогач',81,40,1)}</dict-row>
 <dict-head pos="прил" pw="31" style="margin-top:-9px"></dict-head>
 <dict-row n="1" sub="bachelor" sw="51">${wc('холостяцкий',113,89)}</dict-row>
 <dict-row n="2" sub="reindeer" sw="49">${wc('олений',75,51)}</dict-row>
 <h2 style="margin:32px 0 0">${t('Связанные слова',193)}</h2>
 <div class="rel">${wc('bachelor party',121,97)}${wc('fawn',58,33)}${wc('buck',56,32)}${wc('deer',55,31)}${wc('red deer',80,55)}${wc('hart',51,27)}</div><float-menu></float-menu>`);

def('scroll-bar', `:host{display:flex;flex-direction:column;align-items:center;background:#424242;height:910px}
 .u,.d{border:4px solid transparent;width:0;height:0}.u{border-bottom-color:#858585;border-top:0;margin-top:6px;margin-bottom:7px}.d{border-top-color:#fff;border-bottom:0;margin-top:auto;margin-bottom:7px}.t{width:13px;height:485px;background:#686868}`,
 `<div class="u"></div><div class="t"></div><div class="d"></div>`);

def('task-button', `:host{width:49px;height:40px;display:flex;flex-direction:column;align-items:center;justify-content:space-between;padding-right:1px;flex:none}
 .i{height:38px;display:grid;place-items:center;width:48px;padding-top:2px}u{width:40px;height:2px;background:#e291ec}
 :host([on]) .i{background:#51616a}:host([on]) u{width:48px}:host([hot]) .i{background:#a9672f}:host([hot]) u{width:48px;background:#ff7d15}:host([off]) u{background:none}`,
 e => `<div class="i">${ic(a(e,'icon'),a(e,'w',24),a(e,'h',24))}</div><u></u>`);
def('task-bar', `:host{display:flex;align-items:center;height:40px;background:linear-gradient(90deg,#22343e,#1d313b 20%,#27343a 42%,#1f303b 50%,#253539 57%,#1f303a 66%,#2a3036 81%,#22313a 88%,#192b35);font-size:12px}
 .cl{display:flex;flex-direction:column;align-items:center;width:54px;line-height:18px;margin-right:18px}.e{width:1px;height:40px;background:#68757c;margin-left:12px}`,
 `<task-button icon="win" w="16" h="16" off></task-button><task-button icon="folder" w="22" h="20" off style="width:51px"></task-button><task-button icon="ybrow" on></task-button><task-button icon="chain"></task-button><task-button icon="writer" w="20"></task-button><task-button icon="pc"></task-button><task-button icon="paint"></task-button><task-button icon="math" w="20"></task-button><task-button icon="idle"></task-button><task-button icon="mpl" hot></task-button>` +
 ic('chevu',12,8,'margin-left:943px') + ic('sync',17,18,'margin-left:9px') + ic('net',17,15,'margin-left:7px') + ic('vol',17,14,'margin-left:7px') + t('ENG',23,'margin:0 13px 0 10px') +
 `<div class="cl">${t('22:20',27)}${t('11.12.2024',54)}</div>` + ic('notif',24,25,'margin-top:4px') + `<div class="e"></div>`);

def('ui-icon', `:host{display:block;flex:none}svg{display:block;overflow:visible}`, e => {
  const w = a(e,'w'), h = a(e,'h'), i = ICONS[a(e,'name')];
  return `<svg width="${w}" height="${h}" viewBox="${i[0]}">${i[1]}</svg>`;
});

/* Text run that spaces its letters so the run fills the given width. */
customElements.define('fit-text', class extends HTMLElement {
  connectedCallback() {
    if (this.shadowRoot) return;
    const w = +this.getAttribute('w');
    this.attachShadow({mode:'open'}).innerHTML = `<style>:host{display:block;flex:none;white-space:pre;width:${w}px}span{display:inline-block}</style><span><slot></slot></span>`;
    const s = this.shadowRoot.querySelector('span');
    const n = [...this.textContent].length, nat = s.getBoundingClientRect().width;
    if (n > 1) s.style.letterSpacing = ((w - nat) / (n - 1)).toFixed(3) + 'px';
  }
});
</script>
</body>
</html>
